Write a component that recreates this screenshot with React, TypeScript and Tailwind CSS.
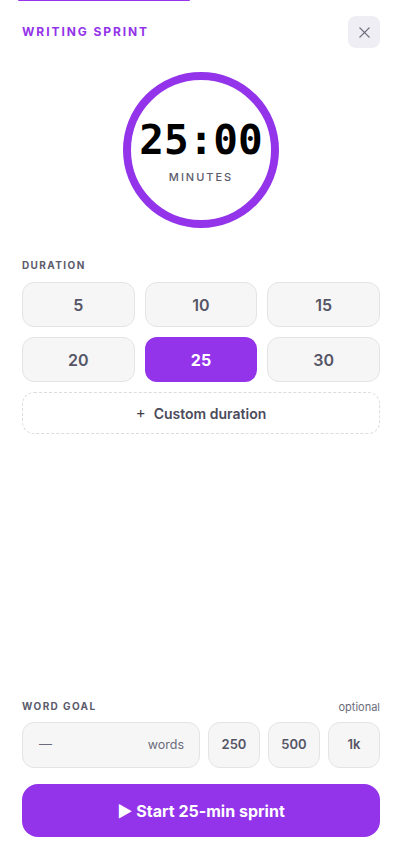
import React from "react";

export default function App() {
  const durations = [5, 10, 15, 20, 25, 30];
  return (
    <div
      className="relative h-[860px] w-[402px] bg-white flex flex-col px-[22px] pb-[23px]"
      style={{ fontFamily: "Inter, 'Noto Sans', sans-serif" }}
    >
      <div className="absolute left-[18px] top-0 h-[2px] w-[172px] -translate-y-px rounded-full bg-[#9333ea]" />
      <div className="flex items-center justify-between pt-4">
        <span className="text-[12px] font-bold tracking-[0.16em] text-[#9333ea]">WRITING SPRINT</span>
        <button className="flex h-8 w-8 items-center justify-center rounded-lg bg-[#efeef4]">
          <svg width="13" height="13" viewBox="0 0 14 14" fill="none" stroke="#6b6b7b" strokeWidth="1.4" strokeLinecap="round">
            <path d="M2 2 L12 12 M12 2 L2 12" />
          </svg>
        </button>
      </div>

      <div className="mt-6 flex justify-center">
        <div className="flex h-[156px] w-[156px] flex-col items-center justify-center rounded-full border-[8px] border-[#9333ea]">
          <span
            className="mt-[6px] text-[41px] font-bold leading-none text-black"
            style={{ fontFamily: "'DejaVu Sans Mono', monospace" }}
          >
            25:00
          </span>
          <span className="mt-[8px] text-[11px] font-medium tracking-[0.18em] text-[#5b5b6b]">MINUTES</span>
        </div>
      </div>

      <div className="mt-[30px] text-[10px] font-bold tracking-[0.14em] text-[#5b5b6b]">DURATION</div>
      <div className="mt-[9px] grid grid-cols-3 gap-[10px]">
        {durations.map((d) =>
          d === 25 ? (
            <button
              key={d}
              className="h-[45px] rounded-xl bg-[#9333ea] text-[16px] font-bold text-white"
            >
              {d}
            </button>
          ) : (
            <button
              key={d}
              className="h-[45px] rounded-xl border border-[#e4e4e7] bg-[#f6f6f7] text-[16px] font-semibold text-[#555566]"
            >
              {d}
            </button>
          )
        )}
      </div>
      <button className="mt-[10px] flex h-[42px] items-center justify-center gap-[8px] rounded-xl border border-dashed border-[#dcdce0] text-[14px] font-semibold text-[#4b4b5b]">
        <span className="text-[15px] font-normal text-[#3f3f4b]">+</span>
        <span>Custom duration</span>
      </button>

      <div className="mt-auto flex items-center justify-between">
        <span className="text-[10px] font-bold tracking-[0.14em] text-[#5b5b6b]">WORD GOAL</span>
        <span className="text-[11px] text-[#6b6b7b]">optional</span>
      </div>
      <div className="mt-[7px] flex gap-[8px]">
        <div className="flex h-[46px] flex-1 items-center justify-between rounded-xl border border-[#e4e4e7] bg-[#f6f6f7] pl-[16px] pr-[15px]">
          <span className="text-[13px] text-[#6b6b7b]">—</span>
          <span className="text-[12.5px] text-[#6b6b7b]">words</span>
        </div>
        {["250", "500", "1k"].map((w) => (
          <button
            key={w}
            className="h-[46px] w-[52px] rounded-xl border border-[#e4e4e7] bg-[#f6f6f7] text-[13px] font-semibold text-[#555566]"
          >
            {w}
          </button>
        ))}
      </div>
      <button className="mt-[16px] flex h-[53px] items-center justify-center rounded-2xl bg-[#9333ea] text-[16px] font-bold text-white">
        ▶ Start 25-min sprint
      </button>
    </div>
  );
}
